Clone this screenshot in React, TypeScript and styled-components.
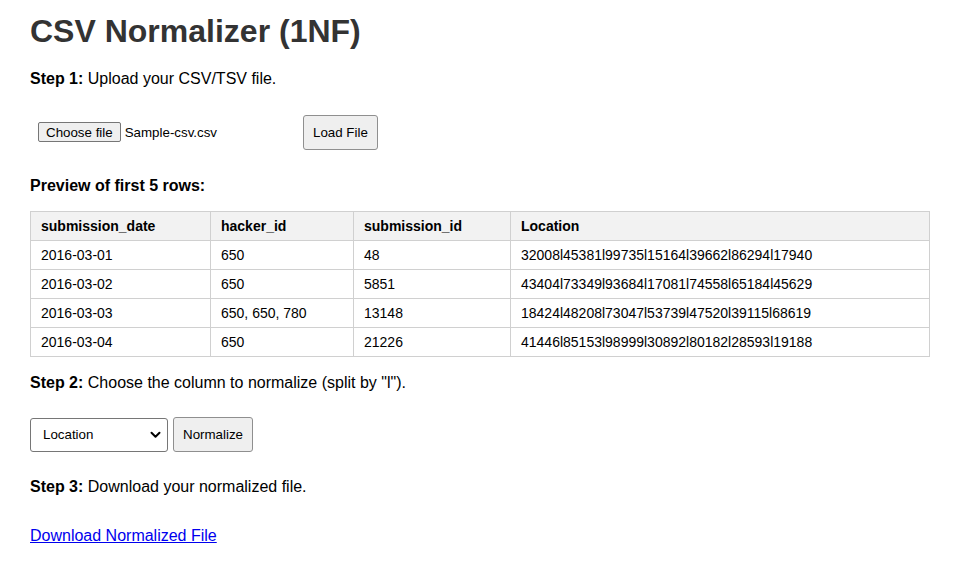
import React from "react";
import styled, { createGlobalStyle } from "styled-components";

const GlobalStyle = createGlobalStyle`
  html, body { margin: 0; padding: 0; background: #fff; }
  body { font-family: "Liberation Sans", Arial, Helvetica, sans-serif; color: #000; }
`;

const Page = styled.div`
  width: 900px;
  padding: 0 30px;
  display: flex;
  flex-direction: column;
`;

const Title = styled.h1`
  margin: 13px 0 0;
  font-size: 32px;
  font-weight: bold;
  color: #333;
  line-height: 37px;
`;

const StepText = styled.p<{ $top: number }>`
  margin: ${(p) => p.$top}px 0 0;
  font-size: 16px;
  line-height: 18px;
`;

const Strong = styled.strong`
  font-weight: bold;
`;

const UploadRow = styled.div`
  margin-top: 26px;
  display: flex;
  align-items: center;
  gap: 10px;
`;

const FilePicker = styled.div`
  width: 247px;
  padding: 8px;
  display: flex;
  align-items: center;
  gap: 4px;
  font-size: 13.33px;
`;

const ChooseButton = styled.button`
  font-family: inherit;
  font-size: 13.33px;
  height: 20px;
  padding: 0 7px;
  border: 1px solid #767676;
  border-radius: 2px;
  background: #efefef;
  color: #000;
`;

const FileName = styled.span`
  font-size: 13.33px;
`;

const ActionButton = styled.button`
  font-family: inherit;
  font-size: 13.33px;
  height: 35px;
  padding: 0 9px;
  border: 1px solid #8f8f8f;
  border-radius: 3px;
  background: #efefef;
  color: #000;
`;

const SectionHeading = styled.h3`
  margin: 27px 0 0;
  font-size: 16px;
  line-height: 18px;
  font-weight: bold;
`;

const Table = styled.table`
  margin-top: 16px;
  width: 899px;
  border-collapse: collapse;
  font-size: 14px;
  table-layout: fixed;
`;

const Col = styled.col<{ $w: number }>`
  width: ${(p) => p.$w}px;
`;

const Th = styled.th`
  background: #f2f2f2;
  border: 1px solid #d0d0d0;
  padding: 6px 10px;
  height: 28px;
  box-sizing: border-box;
  text-align: left;
  font-weight: bold;
  line-height: 16px;
`;

const Td = styled.td`
  border: 1px solid #d0d0d0;
  padding: 6px 10px;
  height: 29px;
  box-sizing: border-box;
  line-height: 16px;
`;

const NormalizeRow = styled.div`
  margin-top: 25px;
  display: flex;
  align-items: center;
  gap: 5px;
`;

const SelectWrap = styled.div`
  position: relative;
  width: 138px;
  height: 34px;
`;

const Select = styled.select`
  appearance: none;
  -webkit-appearance: none;
  width: 100%;
  height: 100%;
  box-sizing: border-box;
  padding: 0 24px 0 12px;
  font-family: inherit;
  font-size: 13.33px;
  border: 1px solid #767676;
  border-radius: 3px;
  background: #fff;
  color: #000;
`;

const Chevron = styled.svg`
  position: absolute;
  right: 7px;
  top: 13px;
  pointer-events: none;
`;

const DownloadLink = styled.a`
  margin-top: 31px;
  font-size: 16px;
  line-height: 18px;
  color: #0000ee;
  text-decoration: underline;
  align-self: flex-start;
`;

const columns = ["submission_date", "hacker_id", "submission_id", "Location"];
const colWidths = [180, 143, 157, 419];
const rows = [
  ["2016-03-01", "650", "48", "32008l45381l99735l15164l39662l86294l17940"],
  ["2016-03-02", "650", "5851", "43404l73349l93684l17081l74558l65184l45629"],
  ["2016-03-03", "650, 650, 780", "13148", "18424l48208l73047l53739l47520l39115l68619"],
  ["2016-03-04", "650", "21226", "41446l85153l98999l30892l80182l28593l19188"],
];

export default function App() {
  return (
    <>
      <GlobalStyle />
      <Page>
        <Title>CSV Normalizer (1NF)</Title>
        <StepText $top={20}>
          <Strong>Step 1:</Strong> Upload your CSV/TSV file.
        </StepText>
        <UploadRow>
          <FilePicker>
            <ChooseButton>Choose file</ChooseButton>
            <FileName>Sample-csv.csv</FileName>
          </FilePicker>
          <ActionButton>Load File</ActionButton>
        </UploadRow>
        <SectionHeading>Preview of first 5 rows:</SectionHeading>
        <Table>
          <colgroup>
            {colWidths.map((w, i) => (
              <Col key={i} $w={w} />
            ))}
          </colgroup>
          <thead>
            <tr>
              {columns.map((c) => (
                <Th key={c}>{c}</Th>
              ))}
            </tr>
          </thead>
          <tbody>
            {rows.map((r, i) => (
              <tr key={i}>
                {r.map((v, j) => (
                  <Td key={j}>{v}</Td>
                ))}
              </tr>
            ))}
          </tbody>
        </Table>
        <StepText $top={17}>
          <Strong>Step 2:</Strong> Choose the column to normalize (split by "l").
        </StepText>
        <NormalizeRow>
          <SelectWrap>
            <Select defaultValue="Location">
              {columns.map((c) => (
                <option key={c} value={c}>
                  {c}
                </option>
              ))}
            </Select>
            <Chevron width="11" height="8" viewBox="0 0 11 8">
              <path d="M1.5 1.8 L5.5 5.8 L9.5 1.8" fill="none" stroke="#000" strokeWidth="2" strokeLinecap="round" strokeLinejoin="round" />
            </Chevron>
          </SelectWrap>
          <ActionButton>Normalize</ActionButton>
        </NormalizeRow>
        <StepText $top={26}>
          <Strong>Step 3:</Strong> Download your normalized file.
        </StepText>
        <DownloadLink href="#">Download Normalized File</DownloadLink>
      </Page>
    </>
  );
}
